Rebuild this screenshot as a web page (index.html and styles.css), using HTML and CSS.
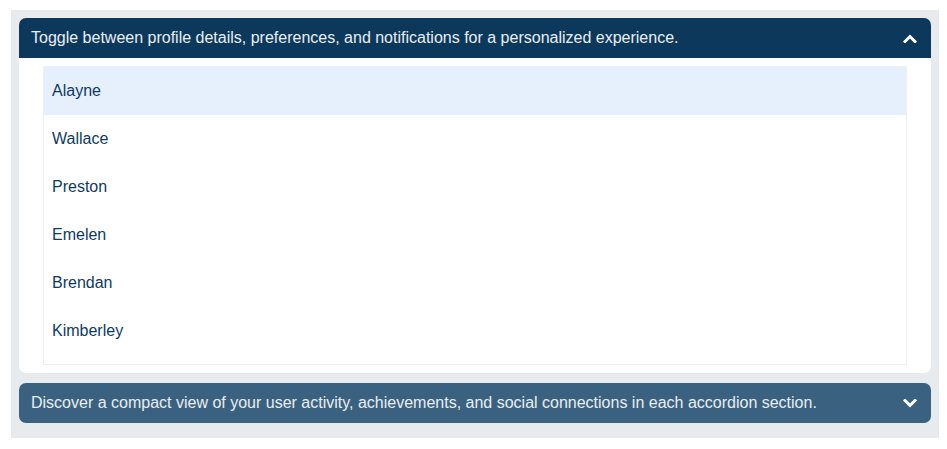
FILE: index.html
```html
<!DOCTYPE html>
<html>
<head>
<meta charset="utf-8">
<link rel="stylesheet" href="styles.css">
</head>
<body>
<div class="accordion">
  <div class="panel open">
    <div class="header">
      <span class="title">Toggle between profile details, preferences, and notifications for a personalized experience.</span>
      <svg class="chev" width="14" height="9" viewBox="0 0 14 9"><path d="M2 7.5 L7 2.5 L12 7.5" fill="none" stroke="#fff" stroke-width="3" stroke-linecap="square" stroke-linejoin="miter"/></svg>
    </div>
    <div class="body">
      <ul class="list">
        <li class="item active">Alayne</li>
        <li class="item">Wallace</li>
        <li class="item">Preston</li>
        <li class="item">Emelen</li>
        <li class="item">Brendan</li>
        <li class="item">Kimberley</li>
      </ul>
    </div>
  </div>
  <div class="panel closed">
    <div class="header">
      <span class="title">Discover a compact view of your user activity, achievements, and social connections in each accordion section.</span>
      <svg class="chev" width="14" height="9" viewBox="0 0 14 9"><path d="M2 1.5 L7 6.5 L12 1.5" fill="none" stroke="#fff" stroke-width="3" stroke-linecap="square" stroke-linejoin="miter"/></svg>
    </div>
  </div>
</div>
</body>
</html>
```
FILE: styles.css
```css
html, body {
  margin: 0;
  padding: 0;
  background: #fff;
}
body {
  padding: 10px 8px 11px 11px;
  font-family: "Liberation Sans", Arial, sans-serif;
}
.accordion {
  width: 928px;
  box-sizing: border-box;
  background: #e8ebee;
  padding: 8px 8px 15px 8px;
  display: flex;
  flex-direction: column;
  gap: 10px;
}
.panel {
  border-radius: 7px;
  overflow: hidden;
}
.header {
  height: 40px;
  box-sizing: border-box;
  padding: 0 12px;
  display: flex;
  align-items: center;
  justify-content: space-between;
  color: #e9eef3;
  font-size: 16px;
}
.open .header {
  background: #0c385c;
}
.closed .header {
  background: #3a6280;
}
.chev {
  display: block;
  margin-right: 2px;
}
.body {
  background: #fff;
  padding: 8px 24px 8px 24px;
}
.list {
  list-style: none;
  margin: 0;
  padding: 0 0 9px 0;
  border: 1px solid #eef0f4;
}
.item {
  height: 48px;
  display: flex;
  align-items: center;
  padding-left: 8px;
  font-size: 16px;
  color: #0f3b5f;
}
.item.active {
  background: #e6f0fd;
}
```
